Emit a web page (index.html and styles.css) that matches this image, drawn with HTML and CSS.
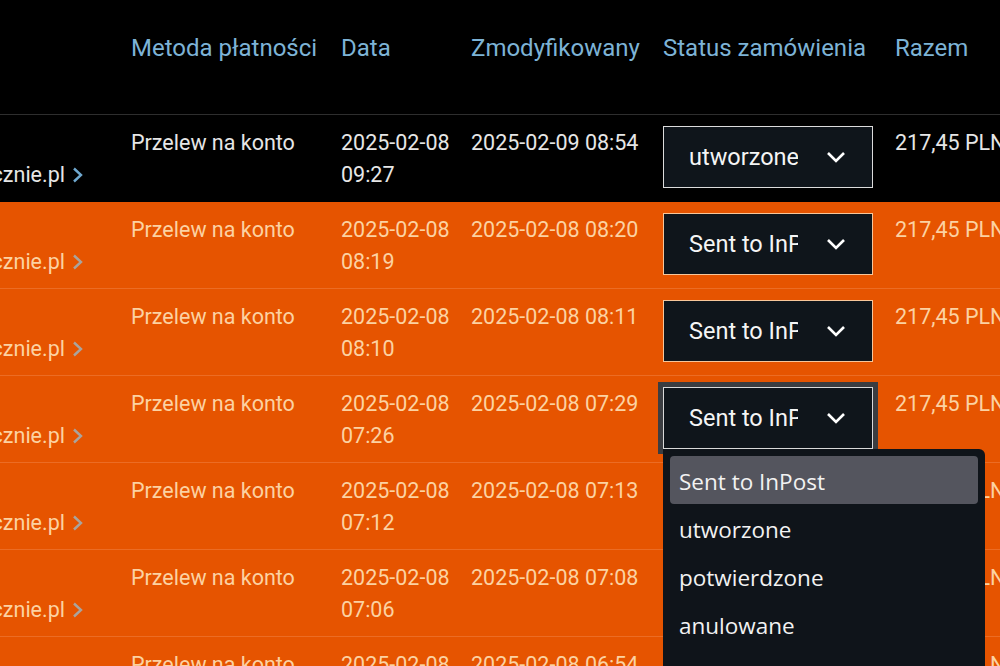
FILE: index.html
```html
<!doctype html>
<html lang="pl">
<head>
<meta charset="utf-8">
<title>Zamówienia</title>
<link rel="stylesheet" href="styles.css">
</head>
<body>
<div id="orders">
  <div class="row head">
    <div class="cell"></div>
    <div class="cell">Metoda płatności</div>
    <div class="cell">Data</div>
    <div class="cell">Zmodyfikowany</div>
    <div class="cell">Status zamówienia</div>
    <div class="cell">Razem</div>
  </div>

  <div class="row">
    <div class="cell shop"><span class="clip">sklep@kupujbezpiecznie.pl</span><svg class="more" viewBox="0 0 11 16"><polyline points="2,1.5 9,8 2,14.5"/></svg></div>
    <div class="cell">Przelew na konto</div>
    <div class="cell">2025-02-08<br>09:27</div>
    <div class="cell">2025-02-09 08:54</div>
    <div class="cell"><div class="select"><span class="val">utworzone</span><svg viewBox="0 0 20 12"><polyline points="2,2 10,10 18,2"/></svg></div></div>
    <div class="cell">217,45 PLN</div>
  </div>

  <div class="row hot">
    <div class="cell shop"><span class="clip">sklep@kupujbezpiecznie.pl</span><svg class="more" viewBox="0 0 11 16"><polyline points="2,1.5 9,8 2,14.5"/></svg></div>
    <div class="cell">Przelew na konto</div>
    <div class="cell">2025-02-08<br>08:19</div>
    <div class="cell">2025-02-08 08:20</div>
    <div class="cell"><div class="select"><span class="val">Sent to InPost</span><svg viewBox="0 0 20 12"><polyline points="2,2 10,10 18,2"/></svg></div></div>
    <div class="cell">217,45 PLN</div>
  </div>

  <div class="row hot">
    <div class="cell shop"><span class="clip">sklep@kupujbezpiecznie.pl</span><svg class="more" viewBox="0 0 11 16"><polyline points="2,1.5 9,8 2,14.5"/></svg></div>
    <div class="cell">Przelew na konto</div>
    <div class="cell">2025-02-08<br>08:10</div>
    <div class="cell">2025-02-08 08:11</div>
    <div class="cell"><div class="select"><span class="val">Sent to InPost</span><svg viewBox="0 0 20 12"><polyline points="2,2 10,10 18,2"/></svg></div></div>
    <div class="cell">217,45 PLN</div>
  </div>

  <div class="row hot">
    <div class="cell shop"><span class="clip">sklep@kupujbezpiecznie.pl</span><svg class="more" viewBox="0 0 11 16"><polyline points="2,1.5 9,8 2,14.5"/></svg></div>
    <div class="cell">Przelew na konto</div>
    <div class="cell">2025-02-08<br>07:26</div>
    <div class="cell">2025-02-08 07:29</div>
    <div class="cell status-open">
      <div class="select focus"><span class="val">Sent to InPost</span><svg viewBox="0 0 20 12"><polyline points="2,2 10,10 18,2"/></svg></div>
      <ul class="menu">
        <li class="on">Sent to InPost</li>
        <li>utworzone</li>
        <li>potwierdzone</li>
        <li>anulowane</li>
        <li>oczekuje na potwierdzenie (</li>
      </ul>
    </div>
    <div class="cell">217,45 PLN</div>
  </div>

  <div class="row hot">
    <div class="cell shop"><span class="clip">sklep@kupujbezpiecznie.pl</span><svg class="more" viewBox="0 0 11 16"><polyline points="2,1.5 9,8 2,14.5"/></svg></div>
    <div class="cell">Przelew na konto</div>
    <div class="cell">2025-02-08<br>07:12</div>
    <div class="cell">2025-02-08 07:13</div>
    <div class="cell"><div class="select"><span class="val">Sent to InPost</span><svg viewBox="0 0 20 12"><polyline points="2,2 10,10 18,2"/></svg></div></div>
    <div class="cell">217,45 PLN</div>
  </div>

  <div class="row hot">
    <div class="cell shop"><span class="clip">sklep@kupujbezpiecznie.pl</span><svg class="more" viewBox="0 0 11 16"><polyline points="2,1.5 9,8 2,14.5"/></svg></div>
    <div class="cell">Przelew na konto</div>
    <div class="cell">2025-02-08<br>07:06</div>
    <div class="cell">2025-02-08 07:08</div>
    <div class="cell"><div class="select"><span class="val">Sent to InPost</span><svg viewBox="0 0 20 12"><polyline points="2,2 10,10 18,2"/></svg></div></div>
    <div class="cell">217,45 PLN</div>
  </div>

  <div class="row hot">
    <div class="cell shop"><span class="clip">sklep@kupujbezpiecznie.pl</span><svg class="more" viewBox="0 0 11 16"><polyline points="2,1.5 9,8 2,14.5"/></svg></div>
    <div class="cell">Przelew na konto</div>
    <div class="cell">2025-02-08<br>06:52</div>
    <div class="cell">2025-02-08 06:54</div>
    <div class="cell"><div class="select"><span class="val">Sent to InPost</span><svg viewBox="0 0 20 12"><polyline points="2,2 10,10 18,2"/></svg></div></div>
    <div class="cell">217,45 PLN</div>
  </div>
</div>
</body>
</html>
```

FILE: styles.css
```css
body{
  margin: 0;
  background: #000;
  overflow: hidden;
  font-family: Roboto, "Liberation Sans", sans-serif;
  font-size: 21.5px;
  line-height: 32px;
  color: #e6e6e6;
}
.row{
  display: grid;
  grid-template-columns: 115px 210px 130px 192px 232px 1fr;
  height: 86px;
  border-bottom: 1px solid #000;
}
.cell{
  padding: 12px 0 0 16px;
  white-space: nowrap;
  min-width: 0;
}
.head{
  height: 114px;
  border-bottom: 1px solid #2e2e2e;
  color: #7db3d6;
  font-size: 24px;
}
.head .cell{
  padding-top: 32px;
}
.hot{
  background: #e65400;
  color: #fcd2a2;
  border-bottom-color: #ec6c24;
}

/* first column, scrolled off to the left */
.shop{
  display: flex;
  justify-content: flex-end;
  align-items: center;
  overflow: hidden;
  padding: 44px 32px 0 0;
  height: 32px;
}
.clip{
  flex-shrink: 0;
}
.more{
  flex-shrink: 0;
  width: 11px;
  height: 16px;
  margin-left: 7px;
  fill: none;
  stroke: #6fa8cf;
  stroke-width: 2.4;
}
.hot .more{
  stroke: #a9a49e;
}

/* status select */
.select{
  box-sizing: border-box;
  width: 210px;
  height: 62px;
  margin-top: -1px;
  display: flex;
  align-items: center;
  padding-left: 25px;
  background: #0f151b;
  border: 1px solid #dcdcdc;
  color: #f5f5f5;
  font-size: 23.5px;
}
.hot .select{
  border-color: #f7c69a;
}
.select.focus{
  border-color: #d9d9d9;
  box-shadow: 0 0 0 5px #3b3d41;
}
.val{
  width: 109px;
  overflow: hidden;
}
.select svg{
  width: 20px;
  height: 12px;
  margin-left: 28px;
  fill: none;
  stroke: #fff;
  stroke-width: 2.6;
}
.status-open{
  position: relative;
  z-index: 2;
}
.menu{
  position: absolute;
  top: 73px;
  left: 16px;
  width: 322px;
  box-sizing: border-box;
  margin: 0;
  padding: 7px;
  list-style: none;
  background: #0f141a;
  border-radius: 0 6px 6px 6px;
  font-family: "Open Sans", "Noto Sans", sans-serif;
  font-size: 22.5px;
  color: #f2f2f2;
}
.menu li{
  height: 48px;
  line-height: 51px;
  padding-left: 9px;
  border-radius: 4px;
  white-space: nowrap;
}
.menu .on{
  background: #54555e;
}
```
